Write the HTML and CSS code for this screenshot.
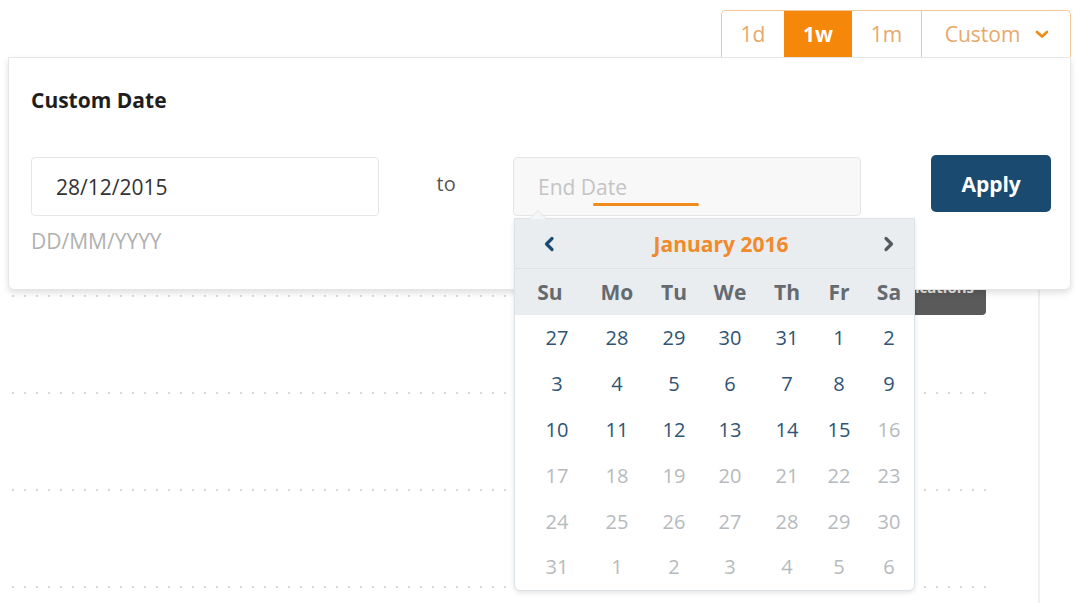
FILE: index.html
```html
<!DOCTYPE html>
<html lang="en">
<head>
    <meta charset="UTF-8">
    <meta name="viewport" content="width=device-width, initial-scale=1.0">
    <title>Custom Date Range</title>
    <link rel="stylesheet" href="styles.css">
</head>
<body>
    <div class="page">
        <div class="toolbar">
            <div class="tabs">
                <span class="tab tab-1d">1d</span>
                <span class="tab tab-1w active">1w</span>
                <span class="tab tab-1m">1m</span>
                <span class="tab tab-custom">Custom
                    <svg class="chevron-down" width="14" height="9" viewBox="0 0 14 9"><polyline points="2,2 7,6.5 12,2" fill="none" stroke="#f08a14" stroke-width="2.6" stroke-linecap="round" stroke-linejoin="round"/></svg>
                </span>
            </div>
        </div>

        <div class="chart">
            <div class="chart-head">
                <button class="notify-btn">Notifications</button>
            </div>
            <div class="grid-row"></div>
            <div class="grid-row"></div>
            <div class="grid-row"></div>
            <div class="grid-row"></div>
        </div>

        <!-- dropdown opened from the Custom tab -->
        <div class="custom-panel">
            <h2>Custom Date</h2>
            <div class="date-row">
                <div class="date-field">
                    <div class="date-input">28/12/2015</div>
                    <div class="date-hint">DD/MM/YYYY</div>
                </div>
                <div class="to-label">to</div>
                <div class="date-field end-field">
                    <div class="date-input focused">
                        <span class="placeholder">End Date</span>
                        <span class="focus-bar"></span>
                    </div>

                    <div class="calendar">
                        <div class="cal-head">
                            <svg width="12" height="16" viewBox="0 0 12 16"><polyline points="9,2.5 3.5,8 9,13.5" fill="none" stroke="#1d4a70" stroke-width="3.2" stroke-linecap="round" stroke-linejoin="round"/></svg>
                            <span class="cal-title">January 2016</span>
                            <svg width="12" height="16" viewBox="0 0 12 16"><polyline points="3,2.5 8.5,8 3,13.5" fill="none" stroke="#555a5f" stroke-width="3.2" stroke-linecap="round" stroke-linejoin="round"/></svg>
                        </div>
                        <div class="cal-week">
                            <span>Su</span><span>Mo</span><span>Tu</span><span>We</span><span>Th</span><span>Fr</span><span>Sa</span>
                        </div>
                        <div class="cal-days">
                            <span>27</span><span>28</span><span>29</span><span>30</span><span>31</span><span>1</span><span>2</span>
                            <span>3</span><span>4</span><span>5</span><span>6</span><span>7</span><span>8</span><span>9</span>
                            <span>10</span><span>11</span><span>12</span><span>13</span><span>14</span><span>15</span><span class="off">16</span>
                            <span class="off">17</span><span class="off">18</span><span class="off">19</span><span class="off">20</span><span class="off">21</span><span class="off">22</span><span class="off">23</span>
                            <span class="off">24</span><span class="off">25</span><span class="off">26</span><span class="off">27</span><span class="off">28</span><span class="off">29</span><span class="off">30</span>
                            <span class="off">31</span><span class="off">1</span><span class="off">2</span><span class="off">3</span><span class="off">4</span><span class="off">5</span><span class="off">6</span>
                        </div>
                    </div>
                </div>
                <button class="apply-btn">Apply</button>
            </div>
        </div>
    </div>
</body>
</html>
```

FILE: styles.css
```css
body {
    margin: 0;
    padding: 0;
    background-color: #fff;
    font-family: 'Open Sans', 'Noto Sans', sans-serif;
    color: #333;
}
.page {
    position: relative;
    width: 1079px;
    height: 603px;
    overflow: hidden;
}

/* range tabs */
.toolbar {
    display: flex;
    justify-content: flex-end;
    padding: 10px 8px 0 0;
}
.tabs {
    display: flex;
    height: 47px;
    border: 1px solid #f3c896;
    border-bottom: none;
    border-radius: 5px 5px 0 0;
    box-sizing: border-box;
    background-color: #fff;
    position: relative;
    z-index: 3;
}
.tab {
    display: flex;
    align-items: center;
    justify-content: center;
    font-size: 21px;
    color: #e9a86a;
}
.tab-1d { width: 62px; }
.tab-1w { width: 68px; }
.tab-1m { width: 69px; border-right: 1px solid #f3c896; }
.tab-custom {
    width: 148px;
    gap: 15px;
    padding-left: 2px;
    box-sizing: border-box;
}
.tab.active {
    background-color: #f5870b;
    color: #fff;
    font-weight: bold;
}

/* background chart */
.chart {
    margin-left: 12px;
    width: 1028px;
    height: 546px;
    padding-right: 45px;
    box-sizing: border-box;
    border-right: 2px solid #efefef;
}
.chart-head {
    display: flex;
    justify-content: flex-end;
    padding-top: 205px;
}
.notify-btn {
    width: 120px;
    height: 53px;
    margin-right: 7px;
    margin-bottom: -20px;
    padding: 0 12px 3px 0;
    border: none;
    border-radius: 4px;
    background-color: #5a5a5a;
    color: #e6e6e6;
    font-family: inherit;
    font-size: 15px;
    font-weight: bold;
    text-align: right;
    line-height: 20px;
}
.grid-row {
    height: 97px;
    background-image: linear-gradient(to right, #d8d8d8 0 2px, transparent 2px 12px);
    background-size: 12px 2px;
    background-repeat: repeat-x;
    background-position: 0 0;
}

/* dropdown panel */
.custom-panel {
    position: absolute;
    top: 57px;
    left: 8px;
    width: 1063px;
    height: 233px;
    box-sizing: border-box;
    padding: 28px 19px 0 22px;
    background-color: #fff;
    border: 1px solid #e6e6e6;
    border-radius: 0 0 6px 6px;
    box-shadow: 0 3px 6px rgba(0,0,0,0.12);
    z-index: 2;
}
.custom-panel h2 {
    margin: 0;
    font-size: 21px;
    line-height: 28px;
    font-weight: bold;
    color: #1e1e1e;
}
.date-row {
    display: flex;
    align-items: flex-start;
    margin-top: 41px;
}
.date-field {
    width: 349px;
    margin-top: 2px;
}
.end-field {
    position: relative;
}
.date-input {
    height: 59px;
    box-sizing: border-box;
    padding: 15px 0 0 24px;
    border: 1px solid #e6e6e6;
    border-radius: 4px;
    font-size: 21px;
    line-height: 28px;
    color: #333;
}
.date-input.focused {
    background-color: #f8f8f8;
    display: flex;
    flex-direction: column;
    align-items: flex-start;
}
.placeholder {
    color: #c4c4c4;
    font-size: 21px;
    line-height: 28px;
}
.focus-bar {
    width: 106px;
    height: 3px;
    margin: 2px 0 0 55px;
    background-color: #f08a1c;
    border-radius: 2px;
}
.date-hint {
    margin-top: 12px;
    font-size: 21px;
    line-height: 26px;
    color: #b0b0b0;
}
.to-label {
    width: 134px;
    padding-top: 15px;
    text-align: center;
    font-size: 20px;
    line-height: 28px;
    color: #555;
}
.apply-btn {
    width: 120px;
    height: 57px;
    margin-left: 70px;
    border: none;
    border-radius: 5px;
    background-color: #1b4a71;
    color: #fff;
    font-family: inherit;
    font-size: 21px;
    font-weight: bold;
}

/* calendar popup */
.calendar {
    position: absolute;
    top: calc(100% + 2px);
    left: 1px;
    width: 401px;
    box-sizing: border-box;
    background-color: #fff;
    border: 1px solid #dde2e6;
    border-radius: 0 0 6px 6px;
    box-shadow: 0 2px 5px rgba(0,0,0,0.1);
}
.calendar::before {
    content: "";
    position: absolute;
    top: -9px;
    left: 14px;
    border-left: 9px solid transparent;
    border-right: 9px solid transparent;
    border-bottom: 9px solid #dde2e6;
}
.calendar::after {
    content: "";
    position: absolute;
    top: -8px;
    left: 15px;
    border-left: 8px solid transparent;
    border-right: 8px solid transparent;
    border-bottom: 8px solid #f4f6f7;
}
.cal-head {
    height: 49px;
    display: flex;
    align-items: center;
    justify-content: space-between;
    padding: 0 19px 0 28px;
    background-color: #e9edf0;
    border-bottom: 1px solid #dde2e6;
}
.cal-title {
    font-size: 21px;
    font-weight: bold;
    color: #f08a2a;
    margin-left: 4px;
}
.cal-week,
.cal-days {
    display: grid;
    grid-template-columns: 56px 64px 50px 62px 52px 52px 48px;
    padding-left: 14px;
}
.cal-week {
    height: 46px;
    align-items: center;
    background-color: #e9edf0;
}
.cal-week span {
    text-align: center;
    font-size: 21px;
    font-weight: bold;
    color: #656a6f;
}
.cal-week span:first-child {
    margin-right: 14px;
}
.cal-days {
    grid-auto-rows: 45.8px;
}
.cal-days span {
    display: flex;
    align-items: center;
    justify-content: center;
    font-size: 20px;
    color: #2f5474;
}
.cal-days span.off {
    color: #b6babd;
}
```
